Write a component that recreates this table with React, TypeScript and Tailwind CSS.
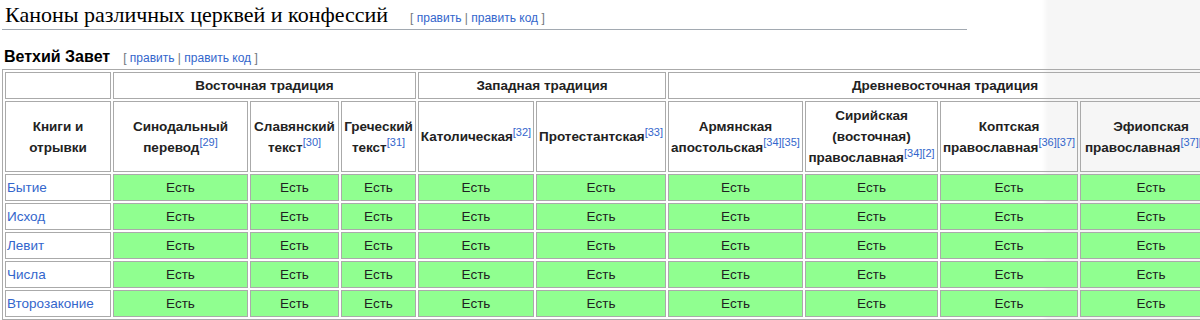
import React from 'react'

// cell box widths, measured border to border
const cols = [106, 135, 89, 75, 116, 130, 135, 133, 138, 142]
const tableWidth = cols.reduce((a, b) => a + b, 0) + (cols.length + 1) * 2 + 2

const heads: { name: string[]; refs: string }[] = [
  { name: ['Синодальный', 'перевод'], refs: '[29]' },
  { name: ['Славянский', 'текст'], refs: '[30]' },
  { name: ['Греческий', 'текст'], refs: '[31]' },
  { name: ['Католическая'], refs: '[32]' },
  { name: ['Протестантская'], refs: '[33]' },
  { name: ['Армянская', 'апостольская'], refs: '[34][35]' },
  { name: ['Сирийская', '(восточная)', 'православная'], refs: '[34][2]' },
  { name: ['Коптская', 'православная'], refs: '[36][37]' },
  { name: ['Эфиопская', 'православная'], refs: '[37][38]' },
]

const books = ['Бытие', 'Исход', 'Левит', 'Числа', 'Второзаконие']

const EditLinks = ({ gap }: { gap: string }) => (
  <span className={`${gap} text-[12px] font-normal text-[#72777d] whitespace-nowrap`} style={{ fontFamily: '"Liberation Sans", Arial, sans-serif' }}>
    [ <a className="text-[#3366cc]">править</a> | <a className="text-[#3366cc]">править код</a> ]
  </span>
)

const cell = 'border border-[#aaaaaa] px-[1px] py-[3px]'

export default function App() {
  return (
    <div
      className="w-[1200px] h-[320px] overflow-hidden bg-[linear-gradient(to_right,#ffffff_1042px,#f6f6f6_1048px)] text-[#222222] pl-[2px]"
      style={{ fontFamily: '"Liberation Sans", Arial, sans-serif' }}
    >
      <div className="w-[965px] border-b border-[#a2a9b1] pl-[3px] pt-[2px] pb-[1px] flex items-baseline">
        <h2 className="text-[22px] leading-[26px] text-[#000000]" style={{ fontFamily: '"Liberation Serif", "Times New Roman", serif' }}>
          Каноны различных церквей и конфессий
        </h2>
        <EditLinks gap="ml-[22px]" />
      </div>
      <div className="pl-[2px] pt-[17px] pb-[2px] flex items-baseline">
        <h3 className="text-[16px] font-bold leading-[20px] text-[#000000]">Ветхий Завет</h3>
        <EditLinks gap="ml-[13px]" />
      </div>
      <table
        className="border-separate border-spacing-[2px] border border-[#aaaaaa] text-[13.5px] leading-[19px] table-fixed"
        style={{ width: tableWidth }}
      >
        <colgroup>
          {cols.map((w, i) => (
            <col key={i} style={{ width: w }} />
          ))}
        </colgroup>
        <thead>
          <tr>
            <th className={cell}></th>
            <th className={cell} colSpan={3}>Восточная традиция</th>
            <th className={cell} colSpan={2}>Западная традиция</th>
            <th className={cell} colSpan={4}>Древневосточная традиция</th>
          </tr>
          <tr className="h-[71px] leading-[21px]">
            <th className={cell}>
              Книги и<br />отрывки
            </th>
            {heads.map((h, i) => (
              <th key={i} className={`${cell} whitespace-nowrap`}>
                {h.name.map((line, j) => (
                  <React.Fragment key={j}>
                    {j > 0 && <br />}
                    {line}
                    {j === h.name.length - 1 && (
                      <sup className="text-[11px] font-normal text-[#3366cc] leading-none">{h.refs}</sup>
                    )}
                  </React.Fragment>
                ))}
              </th>
            ))}
          </tr>
        </thead>
        <tbody>
          {books.map(b => (
            <tr key={b}>
              <td className={`${cell} bg-white`}>
                <a className="text-[#3366cc]">{b}</a>
              </td>
              {heads.map((_, i) => (
                <td key={i} className={`${cell} bg-[#90ff90] text-center text-[#202122]`}>
                  Есть
                </td>
              ))}
            </tr>
          ))}
        </tbody>
      </table>
    </div>
  )
}
